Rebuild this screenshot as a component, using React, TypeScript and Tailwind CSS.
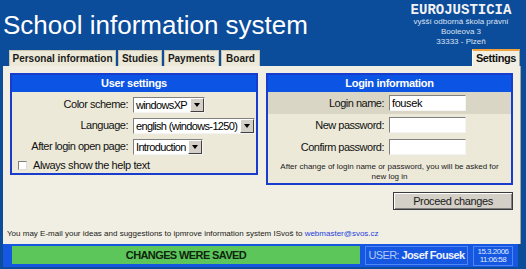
import React from 'react';

const sans = "font-['Liberation_Sans',Arial,sans-serif]";

function Select({ value, width }: { value: string; width: string }) {
    return (
        <div className={`flex h-[16px] bg-white border border-t-[#808080] border-l-[#808080] border-b-[#f4f4f4] border-r-[#f4f4f4] ${width}`}>
            <span className="flex-1 overflow-hidden whitespace-nowrap pl-[2px] text-[11px] leading-[14px] tracking-[-0.65px] text-black">
                {value}
            </span>
            <span className="flex w-[14px] shrink-0 items-center justify-center bg-[#d4d0c8] border border-t-white border-l-white border-b-[#404040] border-r-[#404040]">
                <span className="h-0 w-0 border-x-[3px] border-x-transparent border-t-[4px] border-t-black" />
            </span>
        </div>
    );
}

function TextInput({ value }: { value?: string }) {
    return (
        <div className="h-[16px] w-[77px] bg-white border border-t-[#808080] border-l-[#808080] border-b-[#f4f4f4] border-r-[#f4f4f4] pl-[2px] text-[11px] leading-[14px] tracking-[-0.4px] text-black">
            {value}
        </div>
    );
}

function BoxHeader({ title }: { title: string }) {
    return (
        <div className="h-[17px] bg-[#0c55e4] text-center text-[11px] font-bold leading-[17px] tracking-[-0.3px] text-white">
            {title}
        </div>
    );
}

export default function App() {
    const tabs = [
        { label: 'Personal information', w: 'w-[107px]' },
        { label: 'Studies', w: 'w-[44px]' },
        { label: 'Payments', w: 'w-[55px]' },
        { label: 'Board', w: 'w-[39px]' },
    ];

    return (
        <div className={`flex h-[269px] w-[526px] flex-col overflow-hidden bg-[#0b4c9b] ${sans}`}>
            {/* header */}
            <div className="flex h-[49px] justify-between">
                <div className="pl-[3px] pt-[12px] text-[26px] leading-[26px] text-white">School information system</div>
                <div className="mr-[10px] w-[110px] pt-[3px] text-center">
                    <div className="font-['Liberation_Mono',monospace] text-[14px] font-bold leading-[14px] text-[#f2f2f2]">EUROJUSTICIA</div>
                    <div className="text-[8px] leading-[10px] text-[#dbe3f2]">vyšší odborná škola právní</div>
                    <div className="text-[8px] leading-[10px] text-[#dbe3f2]">Booleova 3</div>
                    <div className="text-[8px] leading-[10px] text-[#dbe3f2]">33333 - Plzeň</div>
                </div>
            </div>

            {/* tabs */}
            <div className="flex h-[17px] items-end justify-between pl-[9px] pr-[6px]">
                <div className="flex items-end gap-[2px]">
                    {tabs.map((t) => (
                        <div
                            key={t.label}
                            className={`h-[16px] ${t.w} bg-[#ece9d8] border border-b-0 border-[#c9c5b3] text-center text-[10px] font-bold leading-[15px] text-[#1a1a1a]`}
                        >
                            {t.label}
                        </div>
                    ))}
                </div>
                <div className="h-[17px] w-[48px] bg-[#f1efe3] border-t-2 border-t-[#f0a23c] border-l border-l-white border-r border-r-[#a9a596] text-center text-[11px] font-bold leading-[15px] tracking-[-0.4px] text-[#111]">
                    Settings
                </div>
            </div>

            {/* panel */}
            <div className="ml-[3px] flex h-[178px] w-[518px] flex-col bg-[#f1efe3] border-r border-r-[#a9a596] px-[7px] pt-[7px]">
                <div className="flex items-start gap-[8px]">
                    {/* user settings */}
                    <div className="h-[102px] w-[249px] border-2 border-[#1a3ccc] bg-[#ece9d8]">
                        <BoxHeader title="User settings" />
                        <div className="grid grid-cols-[116px_auto] items-center gap-x-[5px] pt-[2px] text-[11px] tracking-[-0.5px] text-[#111]">
                            <div className="flex h-[21px] items-center justify-end">Color scheme:</div>
                            <Select value="windowsXP" width="w-[72px]" />
                            <div className="flex h-[21px] items-center justify-end">Language:</div>
                            <Select value="english (windows-1250)" width="w-[122px]" />
                            <div className="flex h-[21px] items-center justify-end">After login open page:</div>
                            <Select value="Introduction" width="w-[70px]" />
                        </div>
                        <div className="flex h-[16px] items-center gap-[6px] pl-[6px] text-[11px] tracking-[-0.4px] text-[#111]">
                            <span className="h-[9px] w-[9px] bg-white border border-t-[#808080] border-l-[#808080] border-b-[#dcdcdc] border-r-[#dcdcdc]" />
                            Always show the help text
                        </div>
                    </div>

                    {/* login information */}
                    <div className="flex w-[247px] flex-col items-end">
                        <div className="h-[112px] w-[247px] border-2 border-[#1a3ccc] bg-[#ece9d8]">
                            <BoxHeader title="Login information" />
                            <div className="text-[11px] tracking-[-0.5px] text-[#111]">
                                <div className="grid h-[22px] grid-cols-[116px_auto] items-center gap-x-[5px] bg-[#dad6c6]">
                                    <div className="text-right">Login name:</div>
                                    <TextInput value="fousek" />
                                </div>
                                <div className="grid h-[22px] grid-cols-[116px_auto] items-center gap-x-[5px]">
                                    <div className="text-right">New password:</div>
                                    <TextInput />
                                </div>
                                <div className="grid h-[22px] grid-cols-[116px_auto] items-center gap-x-[5px]">
                                    <div className="text-right">Confirm password:</div>
                                    <TextInput />
                                </div>
                            </div>
                            <p className="px-[6px] pt-[4px] text-center text-[8px] leading-[10px] text-[#1a1a1a]">
                                After change of login name or password, you will be asked for new log in
                            </p>
                        </div>
                        <button className="mt-[7px] h-[18px] w-[120px] border border-[#3a3a3a] bg-[#d4d0c8] text-[11px] leading-[15px] tracking-[-0.4px] text-[#1a1a1a] shadow-[inset_1px_1px_0_#fff,inset_-1px_-1px_0_#808080]">
                            Proceed changes
                        </button>
                    </div>
                </div>
                <div className="-ml-[3px] mt-auto pb-[5px] text-[8px] leading-[10px] text-[#1a1a1a]">
                    You may E-mail your ideas and suggestions to ipmrove information system ISvoš to{' '}
                    <span className="text-[#1f3fe0]">webmaster@svos.cz</span>
                </div>
            </div>

            {/* status bar */}
            <div className="ml-[3px] flex h-[23px] w-[515px] items-start gap-[5px] bg-[#1657e2] pl-[9px] pt-[2px]">
                <div className="flex h-[18px] w-[348px] items-center justify-center bg-[#5cc65a] text-[11px] font-bold tracking-[-0.6px] text-[#0f250f]">
                    CHANGES WERE SAVED
                </div>
                <div className="flex h-[19px] w-[103px] items-center justify-center border border-[#4f86f5] text-[11px] tracking-[-0.6px]">
                    <span className="text-[#b3c9f5]">USER:&nbsp;</span>
                    <span className="font-bold text-[#eef3fb]">Josef Fousek</span>
                </div>
                <div className="flex h-[20px] w-[40px] flex-col items-center justify-center border border-[#4f86f5] text-[8px] leading-[8px] tracking-[-0.5px] text-[#dfe8fa]">
                    <span>15.3.2006</span>
                    <span>11:06:58</span>
                </div>
            </div>
        </div>
    );
}
